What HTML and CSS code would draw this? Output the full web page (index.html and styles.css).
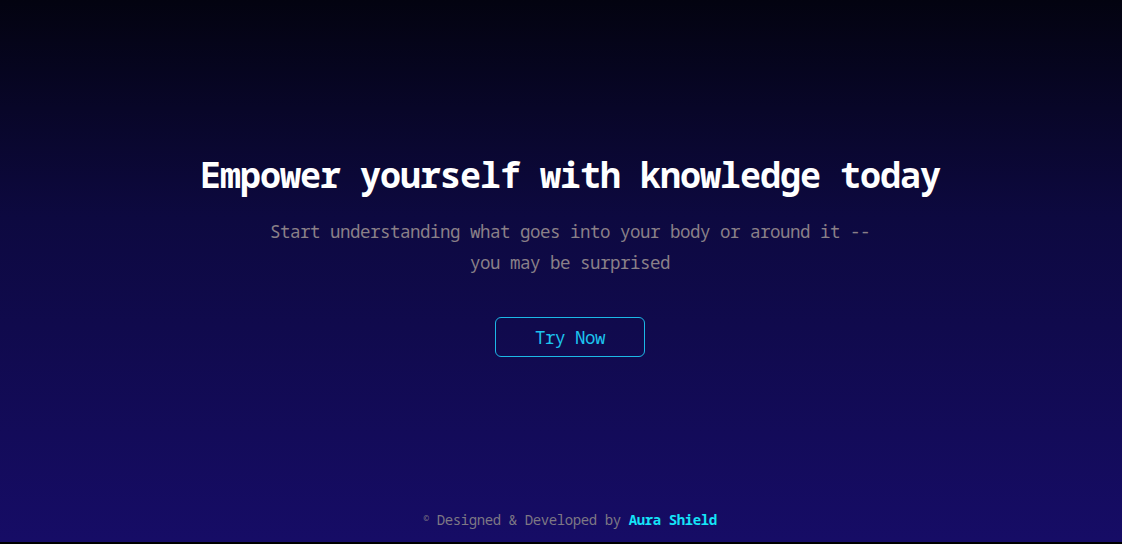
FILE: index.html
```html
<!DOCTYPE html>
<html lang="en">
<head>
<meta charset="utf-8">
<title>Aura Shield</title>
<link rel="stylesheet" href="styles.css">
</head>
<body>
<div class="page">
  <main class="hero">
    <h1 class="hero-title">Empower yourself with knowledge today</h1>
    <p class="hero-sub">Start understanding what goes into your body or around it --<br>you may be surprised</p>
    <a class="btn" href="#">Try Now</a>
  </main>
  <footer class="footer">
    <span class="copy">&copy;</span> Designed &amp; Developed by <span class="brand">Aura Shield</span>
  </footer>
</div>
</body>
</html>
```
FILE: styles.css
```css
html, body {
  margin: 0;
  padding: 0;
  height: 100%;
}
body {
  background: #000;
  font-family: "Noto Sans Mono", "DejaVu Sans Mono", monospace;
}
.page {
  box-sizing: border-box;
  height: 544px;
  padding-left: 18px;
  border-bottom: 2px solid #000;
  background: linear-gradient(180deg, #030310 0%, #0d0940 40%, #160c66 100%);
  display: flex;
  flex-direction: column;
  align-items: center;
}
.hero {
  flex: 1;
  display: flex;
  flex-direction: column;
  align-items: center;
  padding-top: 155px;
}
.hero-title {
  margin: 0;
  font-size: 35px;
  letter-spacing: -1px;
  line-height: 40px;
  font-weight: bold;
  color: #fff;
}
.hero-sub {
  margin: 21px 0 0;
  font-size: 17.5px;
  letter-spacing: -0.5px;
  line-height: 31px;
  color: #8a8088;
  text-align: center;
}
.btn {
  margin-top: 39px;
  width: 148px;
  height: 38px;
  border: 1px solid #1cb8e6;
  border-radius: 6px;
  display: flex;
  align-items: center;
  justify-content: center;
  color: #1cc4ee;
  font-size: 17.5px;
  letter-spacing: -0.5px;
  text-decoration: none;
}
.footer {
  padding-bottom: 12px;
  font-size: 14px;
  letter-spacing: -0.4px;
  line-height: 20px;
  color: #7e7884;
}
.copy {
  font-size: 10px;
  vertical-align: 3px;
}
.brand {
  color: #14e4f8;
  font-weight: bold;
}
```
